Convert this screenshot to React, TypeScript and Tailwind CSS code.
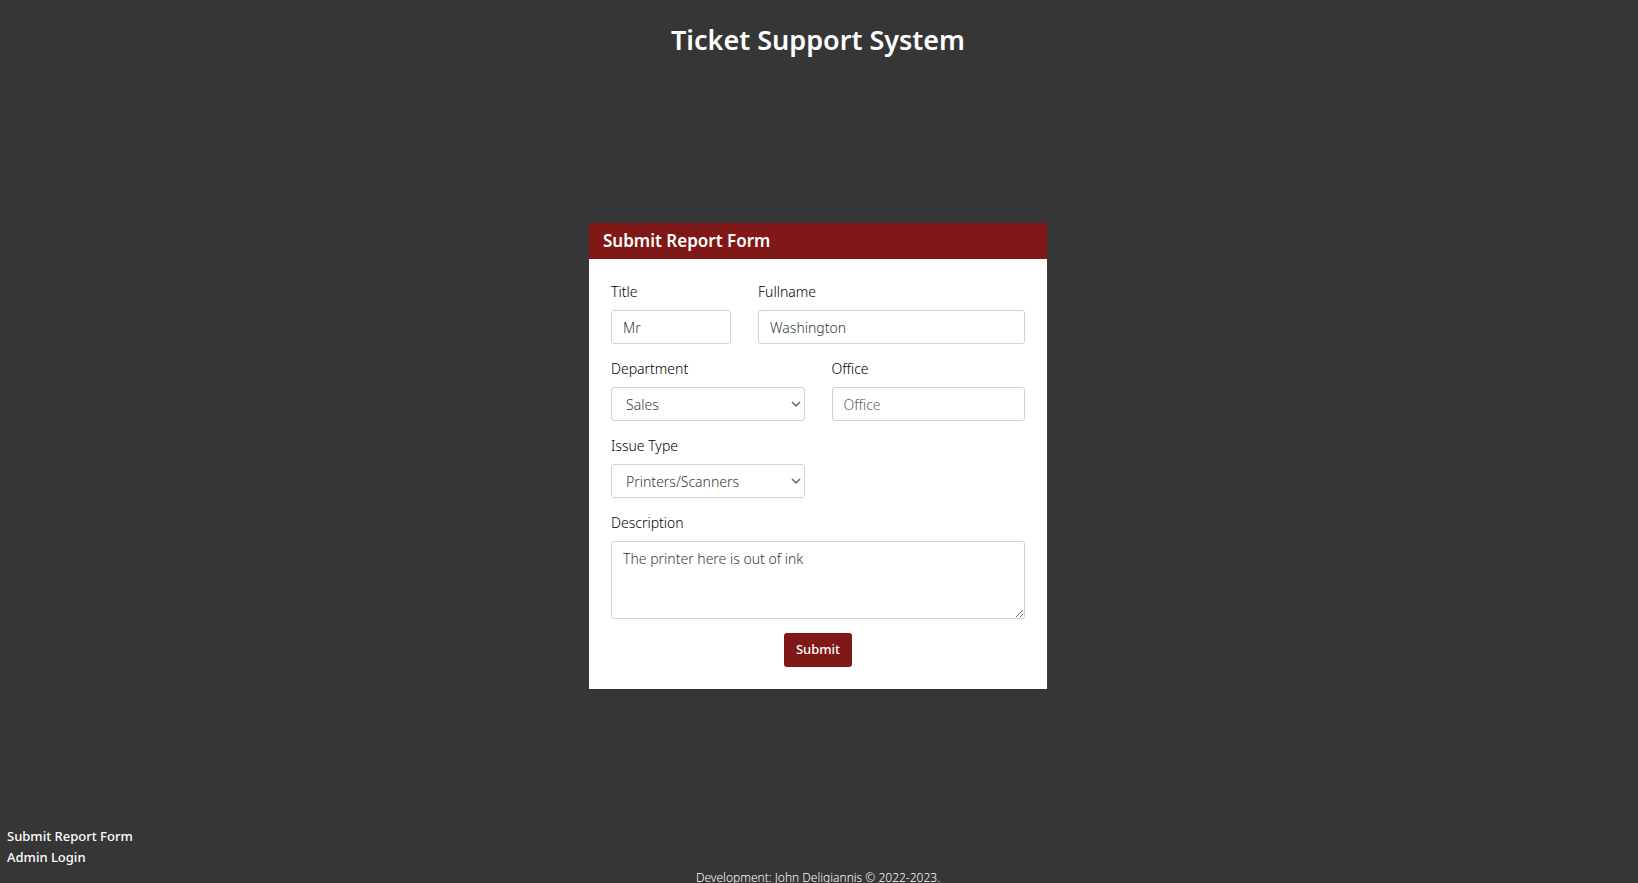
import type { ReactNode } from "react";

const control =
  "h-[34px] w-full rounded-[3px] border border-[#ced4da] bg-white pt-0.5 text-sm font-light text-[#343a40] outline-none placeholder:text-[#5c646b]";

type FieldProps = {
  id: string;
  label: string;
  className?: string;
  children: ReactNode;
};

function Field({ id, label, className = "", children }: FieldProps) {
  return (
    <div className={`flex min-w-0 flex-col gap-2 ${className}`}>
      <label htmlFor={id} className="text-sm leading-[21px] font-light text-black">
        {label}
      </label>
      {children}
    </div>
  );
}

type SelectProps = { id: string; value: string };

function Select({ id, value }: SelectProps) {
  return (
    <div className="relative">
      <select id={id} defaultValue={value} className={`${control} appearance-none pr-6 pl-[14px]`}>
        <option>{value}</option>
      </select>
      <svg
        viewBox="0 0 10 6"
        className="pointer-events-none absolute top-[14px] right-[4px] h-[6px] w-[10px]"
        fill="none"
        stroke="#6b6b6b"
        strokeWidth="1.7"
        aria-hidden="true"
      >
        <path d="M1 1l4 3.8L9 1" />
      </svg>
    </div>
  );
}

export default function App() {
  return (
    <div className="flex h-screen flex-col overflow-hidden bg-[#363636] pr-0.5 font-['Noto_Sans','Open_Sans',sans-serif] text-white">
      <header className="pt-5 text-center">
        <h1 className="text-[27px] leading-10 font-semibold">Ticket Support System</h1>
      </header>

      <main className="flex flex-1 items-center justify-center pt-[25px]">
        <section className="w-full max-w-[458px] bg-white">
          <h2 className="bg-[#801817] px-[14px] text-[17px] leading-9 font-semibold">
            Submit Report Form
          </h2>
          <form
            className="flex flex-col gap-[14px] p-[22px]"
            onSubmit={(e) => e.preventDefault()}
          >
            <div className="flex gap-[27px]">
              <Field id="title" label="Title" className="w-[120px]">
                <input id="title" defaultValue="Mr" className={`${control} px-[11px]`} />
              </Field>
              <Field id="fullname" label="Fullname" className="flex-1">
                <input id="fullname" defaultValue="Washington" className={`${control} px-[11px]`} />
              </Field>
            </div>
            <div className="grid grid-cols-2 gap-[27px]">
              <Field id="department" label="Department">
                <Select id="department" value="Sales" />
              </Field>
              <Field id="office" label="Office">
                <input id="office" placeholder="Office" className={`${control} px-[11px]`} />
              </Field>
            </div>
            <div className="grid grid-cols-2 gap-[27px]">
              <Field id="issue" label="Issue Type">
                <Select id="issue" value="Printers/Scanners" />
              </Field>
            </div>
            <Field id="description" label="Description">
              <textarea
                id="description"
                defaultValue="The printer here is out of ink"
                className="h-[78px] w-full resize rounded-[3px] border border-[#ced4da] bg-white px-[11px] py-[6px] text-sm leading-[21px] font-light text-[#343a40] outline-none"
              />
            </Field>
            <button
              type="submit"
              className="h-[34px] self-center rounded-[3px] bg-[#801817] px-3 text-[13px] font-medium"
            >
              Submit
            </button>
          </form>
        </section>
      </main>

      <nav className="flex flex-col items-start px-[7px] text-[13px] leading-[21px] font-medium">
        <a href="#submit">Submit Report Form</a>
        <a href="#admin">Admin Login</a>
      </nav>
      <footer className="h-[15px] text-center text-xs leading-5 font-light">
        Development: John Deligiannis © 2022-2023.
      </footer>
    </div>
  );
}
